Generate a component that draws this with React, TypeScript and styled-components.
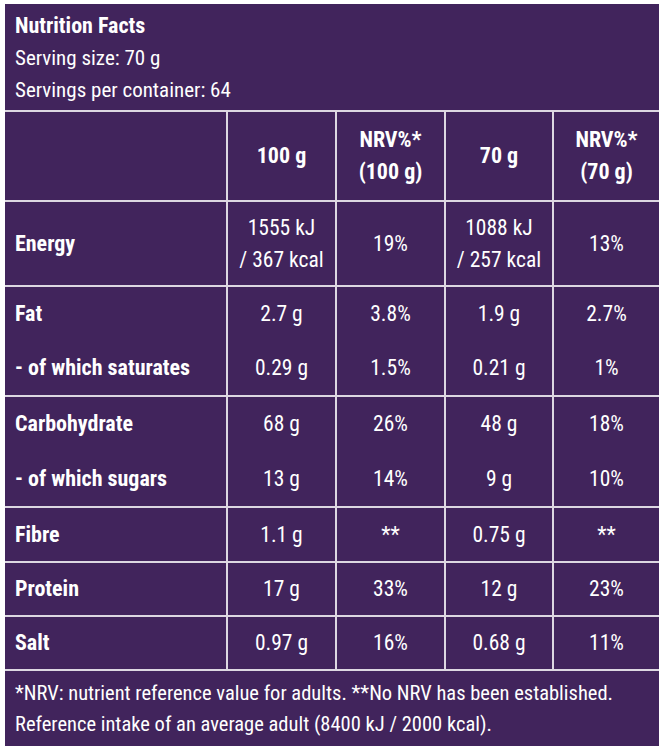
import React from "react";
import styled, { createGlobalStyle } from "styled-components";

const GlobalStyle = createGlobalStyle`
  body {
    margin: 0;
    background: #ffffff;
  }
`;

const purple = "#41245c";
const line = "#ddd8e2";

const Panel = styled.div`
  width: 654px;
  margin: 4px 0 0 5px;
  background: ${purple};
  color: #ffffff;
  font-family: "Liberation Sans Narrow", "Arial Narrow", "Roboto Condensed", "DejaVu Sans Condensed", sans-serif;
  font-size: 21px;
`;

const Intro = styled.div`
  padding: 6px 10px 4px;
  line-height: 32px;
`;

const Title = styled.div`
  font-weight: 700;
  font-size: 22px;
`;

const Table = styled.div`
  display: grid;
  grid-template-columns: 221px 107px 107px 106px 105px;
  gap: 2px;
  background: ${line};
  border-top: 2px solid ${line};
  border-bottom: 2px solid ${line};
`;

const Cell = styled.div<{ $label?: boolean; $head?: boolean }>`
  background: ${purple};
  display: flex;
  flex-direction: column;
  justify-content: center;
  align-items: ${(p) => (p.$label ? "flex-start" : "center")};
  text-align: ${(p) => (p.$label ? "left" : "center")};
  padding: ${(p) => (p.$label ? "0 10px" : "0")};
  font-weight: ${(p) => (p.$label || p.$head ? 700 : 400)};
  font-size: ${(p) => (p.$label || p.$head ? "22px" : "21.5px")};
  line-height: 32px;
`;

const Slot = styled.div<{ $h: number }>`
  height: ${(p) => p.$h}px;
  display: flex;
  flex-direction: column;
  justify-content: center;
`;

const Footer = styled.div`
  padding: 7px 10px 6px;
  font-size: 20.5px;
  line-height: 31px;
  white-space: nowrap;
`;

type Row = { heights: number[]; cells: string[][] };

const rows: Row[] = [
  {
    heights: [83],
    cells: [["Energy"], ["1555 kJ\n/ 367 kcal"], ["19%"], ["1088 kJ\n/ 257 kcal"], ["13%"]],
  },
  {
    heights: [54, 54],
    cells: [
      ["Fat", "- of which saturates"],
      ["2.7 g", "0.29 g"],
      ["3.8%", "1.5%"],
      ["1.9 g", "0.21 g"],
      ["2.7%", "1%"],
    ],
  },
  {
    heights: [54, 55],
    cells: [
      ["Carbohydrate", "- of which sugars"],
      ["68 g", "13 g"],
      ["26%", "14%"],
      ["48 g", "9 g"],
      ["18%", "10%"],
    ],
  },
  { heights: [53], cells: [["Fibre"], ["1.1 g"], ["**"], ["0.75 g"], ["**"]] },
  { heights: [52], cells: [["Protein"], ["17 g"], ["33%"], ["12 g"], ["23%"]] },
  { heights: [52], cells: [["Salt"], ["0.97 g"], ["16%"], ["0.68 g"], ["11%"]] },
];

const heads = ["", "100 g", "NRV%*\n(100 g)", "70 g", "NRV%*\n(70 g)"];

function Lines({ text }: { text: string }) {
  return (
    <>
      {text.split("\n").map((t) => (
        <div key={t}>{t}</div>
      ))}
    </>
  );
}

export default function App() {
  return (
    <>
      <GlobalStyle />
      <Panel>
        <Intro>
          <Title>Nutrition Facts</Title>
          <div>Serving size: 70 g</div>
          <div>Servings per container: 64</div>
        </Intro>
        <Table>
          {heads.map((h, i) => (
            <Cell key={i} $head style={{ height: 88 }}>
              <Lines text={h} />
            </Cell>
          ))}
          {rows.map((row, r) =>
            row.cells.map((vals, c) => (
              <Cell key={`${r}-${c}`} $label={c === 0}>
                {vals.map((v, k) => (
                  <Slot key={k} $h={row.heights[k]}>
                    <Lines text={v} />
                  </Slot>
                ))}
              </Cell>
            ))
          )}
        </Table>
        <Footer>
          <div>*NRV: nutrient reference value for adults. **No NRV has been established.</div>
          <div>Reference intake of an average adult (8400 kJ / 2000 kcal).</div>
        </Footer>
      </Panel>
    </>
  );
}
